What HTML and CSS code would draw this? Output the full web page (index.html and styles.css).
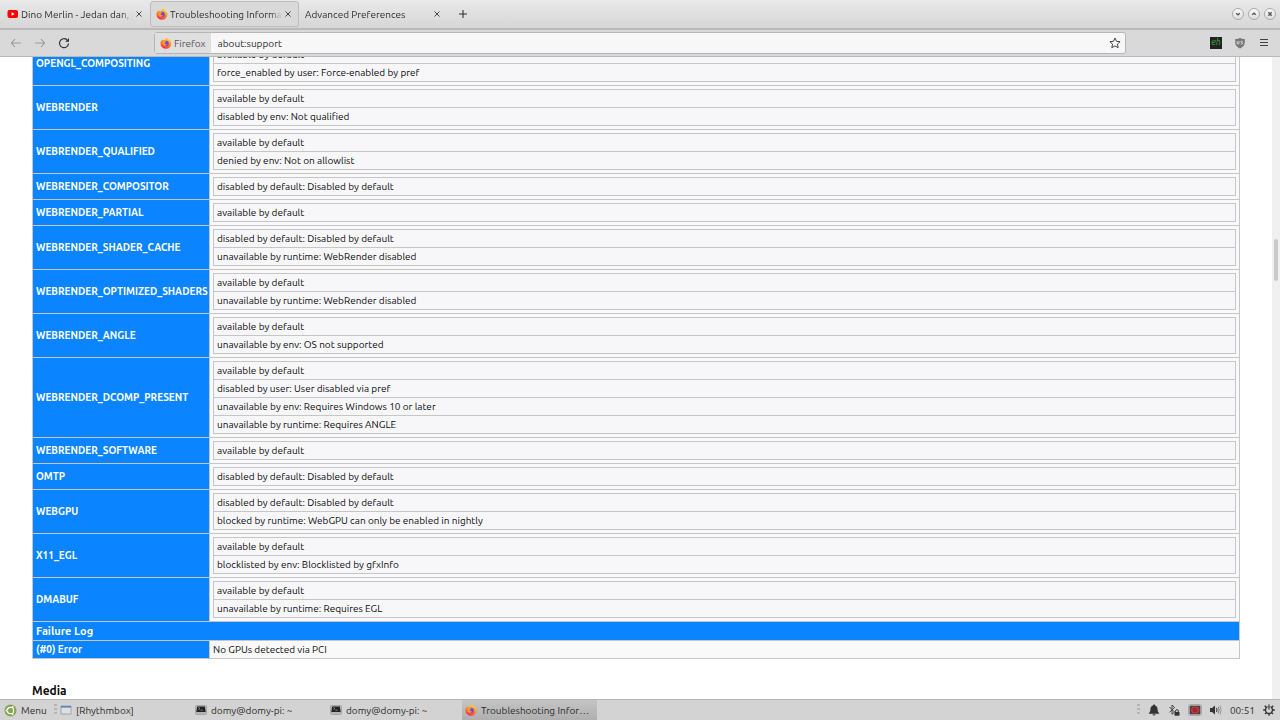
FILE: index.html
```
<!DOCTYPE html>
<html lang="en">
<head>
    <meta charset="UTF-8">
    <meta name="viewport" content="width=device-width, initial-scale=1.0">
    <title>Troubleshooting Information</title>
    <link rel="stylesheet" href="styles.css">
</head>
<body>
    <svg width="0" height="0" class="defs" aria-hidden="true">
        <defs>
            <linearGradient id="flame" x1="0.8" y1="0" x2="0.3" y2="1">
                <stop offset="0" stop-color="#ffe43a"/>
                <stop offset="0.5" stop-color="#ff8a1e"/>
                <stop offset="1" stop-color="#f5264f"/>
            </linearGradient>
            <symbol id="firefox" viewBox="0 0 16 16">
                <path fill="url(#flame)" d="M8.800 0.600c1.200 0.900 1.700 1.900 2 2.900 0.500-0.200 0.600-0.700 0.500-1.200 2.300 1.500 4 3.800 4 6.400A7.300 7.100 0 0 1 8 15.600 7.300 7.100 0 0 1 0.700 8.500c0-1.900 0.600-3.500 1.500-4.600l0.200 1c0.300-0.900 0.900-1.800 1.700-2.300v1.500c1.100-0.300 2-0.100 2.700 0.300C7 3 7.600 1.700 8.800 0.600z"/>
                <circle cx="8.200" cy="8.600" r="3.500" fill="#7542e5"/>
                <path fill="#ff9a1f" d="M3 5.200c1.500-0.500 2.900-0.300 3.800 0.500 0.800 0 1.400 0.200 1.500 0.700-0.300 0.800-1.700 0.900-2.100 1.700 0.200 1.600 1.700 2.300 3.400 1.700-0.800 1.900-3.100 2.600-4.900 1.400C3 10.100 2.400 7.500 3 5.200z"/>
            </symbol>
            <symbol id="cross" viewBox="0 0 8 8">
                <path d="M1.500 1.500l5 5M6.500 1.500l-5 5" fill="none" stroke="#444" stroke-width="1"/>
            </symbol>
            <symbol id="terminal" viewBox="0 0 12 12">
                <rect x="0.500" y="1.500" width="11" height="9" rx="1" fill="#b5b5b5" stroke="#a5a5a5"/>
                <path d="M2.200 2.500h7.600l0.900 5.500H1.300z" fill="#222"/>
                <path d="M3.500 3.500l1.500 1-1.500 1M5.500 6.200h2" fill="none" stroke="#ccc" stroke-width="0.600"/>
            </symbol>
        </defs>
    </svg>

    <header class="tab-strip">
        <div class="tab">
            <svg class="tab-icon" viewBox="0 0 12 12"><rect x="0.500" y="2" width="10.500" height="8" rx="2" fill="#f00"/><path d="M4.600 4.200v3.600L7.600 6z" fill="#fff"/></svg>
            <span class="tab-title">Dino Merlin - Jedan dan, jedan život</span>
            <button class="close" aria-label="Close tab"><svg viewBox="0 0 8 8"><use href="#cross"/></svg></button>
        </div>
        <div class="tab active">
            <svg class="tab-icon" viewBox="0 0 16 16"><use href="#firefox"/></svg>
            <span class="tab-title">Troubleshooting Information</span>
            <button class="close" aria-label="Close tab"><svg viewBox="0 0 8 8"><use href="#cross"/></svg></button>
        </div>
        <div class="tab">
            <span class="tab-title">Advanced Preferences</span>
            <button class="close" aria-label="Close tab"><svg viewBox="0 0 8 8"><use href="#cross"/></svg></button>
        </div>
        <button class="new-tab" aria-label="New tab"><svg viewBox="0 0 8 8"><path d="M4 0v8M0 4h8" stroke="#333" stroke-width="1.100"/></svg></button>
        <div class="window-buttons">
            <button aria-label="Minimize"><svg viewBox="0 0 12 12"><path d="M3.800 5l2.200 2 2.200-2" fill="none" stroke="#555" stroke-width="1.500"/></svg></button>
            <button aria-label="Maximize"><svg viewBox="0 0 12 12"><path d="M3.800 7l2.200-2 2.200 2" fill="none" stroke="#555" stroke-width="1.500"/></svg></button>
            <button aria-label="Close"><svg viewBox="0 0 12 12"><path d="M4 4l4 4M8 4l-4 4" fill="none" stroke="#555" stroke-width="1.600"/></svg></button>
        </div>
    </header>

    <nav class="toolbar">
        <div class="nav-buttons">
            <button aria-label="Back" disabled><svg viewBox="0 0 12 12"><path d="M11 6H1.500M5 2L1.500 6 5 10" fill="none" stroke="#999" stroke-width="1.100"/></svg></button>
            <button aria-label="Forward" disabled><svg viewBox="0 0 12 12"><path d="M1 6h9.500M7 2l3.500 4L7 10" fill="none" stroke="#999" stroke-width="1.100"/></svg></button>
            <button aria-label="Reload"><svg viewBox="0 0 12 12"><path d="M10.500 6.500A4.500 4.500 0 1 1 9 2.800" fill="none" stroke="#333" stroke-width="1.200"/><path d="M11 1v3.800H7.200z" fill="#333"/></svg></button>
        </div>
        <div class="url-bar">
            <span class="identity"><svg viewBox="0 0 16 16"><use href="#firefox"/></svg>Firefox</span>
            <input type="text" value="about:support" aria-label="Address">
            <button aria-label="Bookmark this page"><svg viewBox="0 0 12 12"><path d="M6 1l1.500 3.300 3.600 0.400-2.700 2.400 0.800 3.600L6 8.900l-3.200 1.800 0.800-3.600L0.900 4.700l3.600-0.400z" fill="none" stroke="#444" stroke-width="1"/></svg></button>
        </div>
        <div class="extensions">
            <button aria-label="Enhancer"><span class="eh">eh</span></button>
            <button aria-label="uBlock"><svg viewBox="0 0 12 12"><path d="M6 0.700c1.500 1 3 1.300 4.800 1.300v3.500C10.800 8.700 8.500 10.500 6 11.500 3.500 10.500 1.200 8.700 1.200 5.500V2C3 2 4.500 1.700 6 0.700z" fill="#777"/><path d="M3.200 4v2.200q0 1 0.900 1t0.900-1V4M8.700 4.300q-1.800-0.600-1.900 0.500c0 0.900 1.900 0.400 1.900 1.500s-1.300 0.900-2 0.500" fill="none" stroke="#eee" stroke-width="0.800"/></svg></button>
            <button aria-label="Open menu"><svg viewBox="0 0 12 12"><path d="M2 2.500h8M2 5.500h8M2 8.500h8" stroke="#444" stroke-width="1"/></svg></button>
        </div>
    </nav>

    <div class="viewport">
        <main class="page">
            <table class="report">
                <colgroup><col class="feature"><col></colgroup>
                <tr><th>OPENGL_COMPOSITING</th><td><table><tr><td>available by default</td></tr><tr><td>force_enabled by user: Force-enabled by pref</td></tr></table></td></tr>
                <tr><th>WEBRENDER</th><td><table><tr><td>available by default</td></tr><tr><td>disabled by env: Not qualified</td></tr></table></td></tr>
                <tr><th>WEBRENDER_QUALIFIED</th><td><table><tr><td>available by default</td></tr><tr><td>denied by env: Not on allowlist</td></tr></table></td></tr>
                <tr><th>WEBRENDER_COMPOSITOR</th><td><table><tr><td>disabled by default: Disabled by default</td></tr></table></td></tr>
                <tr><th>WEBRENDER_PARTIAL</th><td><table><tr><td>available by default</td></tr></table></td></tr>
                <tr><th>WEBRENDER_SHADER_CACHE</th><td><table><tr><td>disabled by default: Disabled by default</td></tr><tr><td>unavailable by runtime: WebRender disabled</td></tr></table></td></tr>
                <tr><th>WEBRENDER_OPTIMIZED_SHADERS</th><td><table><tr><td>available by default</td></tr><tr><td>unavailable by runtime: WebRender disabled</td></tr></table></td></tr>
                <tr><th>WEBRENDER_ANGLE</th><td><table><tr><td>available by default</td></tr><tr><td>unavailable by env: OS not supported</td></tr></table></td></tr>
                <tr><th>WEBRENDER_DCOMP_PRESENT</th><td><table><tr><td>available by default</td></tr><tr><td>disabled by user: User disabled via pref</td></tr><tr><td>unavailable by env: Requires Windows 10 or later</td></tr><tr><td>unavailable by runtime: Requires ANGLE</td></tr></table></td></tr>
                <tr><th>WEBRENDER_SOFTWARE</th><td><table><tr><td>available by default</td></tr></table></td></tr>
                <tr><th>OMTP</th><td><table><tr><td>disabled by default: Disabled by default</td></tr></table></td></tr>
                <tr><th>WEBGPU</th><td><table><tr><td>disabled by default: Disabled by default</td></tr><tr><td>blocked by runtime: WebGPU can only be enabled in nightly</td></tr></table></td></tr>
                <tr><th>X11_EGL</th><td><table><tr><td>available by default</td></tr><tr><td>blocklisted by env: Blocklisted by gfxInfo</td></tr></table></td></tr>
                <tr><th>DMABUF</th><td><table><tr><td>available by default</td></tr><tr><td>unavailable by runtime: Requires EGL</td></tr></table></td></tr>
                <tr><th colspan="2" class="section">Failure Log</th></tr>
                <tr><th>(#0) Error</th><td class="plain">No GPUs detected via PCI</td></tr>
            </table>
            <h2>Media</h2>
        </main>
        <div class="scrollbar"><div class="thumb"></div></div>
    </div>

    <footer class="panel">
        <button class="menu"><svg viewBox="0 0 14 14"><circle cx="7" cy="7" r="6.500" fill="#87a556"/><circle cx="7" cy="7" r="3.400" fill="none" stroke="#fff" stroke-width="1.300"/><path d="M7 7L10 3M7 7l3 4M7 7H2" stroke="#87a556" stroke-width="1"/><circle cx="2.700" cy="7" r="1" fill="#fff"/><circle cx="9.300" cy="3.200" r="1" fill="#fff"/><circle cx="9.300" cy="10.800" r="1" fill="#fff"/></svg>Menu</button>
        <span class="grip"></span>
        <div class="tasks">
            <button><svg viewBox="0 0 12 12"><rect x="1" y="2" width="10" height="8" fill="#dde0e3" stroke="#999" stroke-width="0.800"/><path d="M1 2.800h10" stroke="#5b84b8" stroke-width="1.600"/></svg><span>[Rhythmbox]</span></button>
            <button><svg viewBox="0 0 12 12"><use href="#terminal"/></svg><span>domy@domy-pi: ~</span></button>
            <button><svg viewBox="0 0 12 12"><use href="#terminal"/></svg><span>domy@domy-pi: ~</span></button>
            <button class="current"><svg viewBox="0 0 16 16"><use href="#firefox"/></svg><span>Troubleshooting Information — Mozilla Firefox</span></button>
        </div>
        <div class="tray">
            <span class="grip"></span>
            <svg viewBox="0 0 12 12"><path d="M6 0.500c0.600 0 1 0.400 1 1 1.800 0.500 2.600 2 2.600 4 0 2 0.600 2.800 1.600 3.700v0.600H0.800v-0.600c1-0.900 1.600-1.700 1.600-3.700 0-2 0.800-3.500 2.600-4 0-0.600 0.400-1 1-1zM4.500 10.300h3a1.500 1.300 0 0 1-3 0z" fill="#333"/></svg>
            <svg viewBox="0 0 12 12"><path d="M1.500 3l5 5L4 10.300V1l2.500 2.400-5 5" fill="none" stroke="#444" stroke-width="1"/><rect x="6.500" y="8" width="5" height="3.700" fill="#333"/><path d="M7.600 8V7a1.400 1.400 0 0 1 2.800 0v1" fill="none" stroke="#333" stroke-width="0.900"/></svg>
            <svg class="display" viewBox="0 0 14 12"><rect x="0.500" y="0.500" width="13" height="11" rx="1" fill="#eee" stroke="#aaa"/><rect x="1.500" y="1.500" width="11" height="9" fill="#444"/><ellipse cx="7" cy="6" rx="4" ry="3.600" fill="#d8343c"/><circle cx="7" cy="6" r="2" fill="none" stroke="#7d2026"/><path d="M5.600 4.600l2.800 2.800" stroke="#7d2026"/></svg>
            <svg viewBox="0 0 12 12"><path d="M0 4h2l3-2.500v9L2 8H0z" fill="#333"/><path d="M6.500 4q1 2 0 4" fill="none" stroke="#333"/><path d="M8.300 2.800q1.700 3.200 0 6.400" fill="none" stroke="#777"/><path d="M10 1.500q2.400 4.500 0 9" fill="none" stroke="#999"/></svg>
            <time>00:51</time>
            <svg viewBox="0 0 12 12"><circle cx="6" cy="6" r="3.500" fill="none" stroke="#333" stroke-width="1.300"/><path d="M6 9v2.800M9 6h2.800M0.200 6H3M8 8l2 2M4 8l-2 2M8.300 3.700l2-2M3.700 3.700l-2-2" stroke="#333" stroke-width="1.300"/><path d="M6 0v6" stroke="#d3d3d3" stroke-width="3"/><path d="M6 0.500v5" stroke="#333" stroke-width="1.200"/></svg>
        </div>
    </footer>
</body>
</html>
```
FILE: styles.css
```
* {
    box-sizing: border-box;
}
body {
    margin: 0;
    height: 100vh;
    display: flex;
    flex-direction: column;
    overflow: hidden;
    font-family: Ubuntu, 'Noto Sans', sans-serif;
    font-size: 10px;
    color: #2c2c2c;
    background: #fff;
}
.defs {
    position: absolute;
}
button, input {
    font: inherit;
    color: inherit;
    background: none;
    border: none;
    padding: 0;
    margin: 0;
}
svg {
    width: 12px;
    height: 12px;
    flex: none;
    display: block;
}
.tab-strip {
    display: flex;
    flex: none;
    align-items: center;
    height: 30px;
    padding-left: 1px;
    background: linear-gradient(#e9e9e9, #d6d6d6);
    border-bottom: 2px solid #b9b9b9;
}
.tab {
    display: flex;
    align-items: center;
    gap: 2px;
    width: 149px;
    height: 26px;
    padding: 0 6px 0 5px;
    border: 1px solid transparent;
    border-radius: 3px;
}
.tab.active {
    background: #d9d9d9;
    border-color: #bcbcbc;
}
.tab-title {
    flex: 1;
    overflow: hidden;
    white-space: nowrap;
    -webkit-mask-image: linear-gradient(to left, transparent, #000 12px);
    mask-image: linear-gradient(to left, transparent, #000 12px);
}
.close svg, .new-tab svg {
    width: 8px;
    height: 8px;
}
.new-tab {
    padding: 4px;
    margin-left: 7px;
}
.window-buttons {
    display: flex;
    gap: 4px;
    margin-left: auto;
    padding-right: 4px;
}
.window-buttons button {
    border: 1px solid #aaa;
    border-radius: 50%;
    background: linear-gradient(#fafafa, #dedede);
}
.window-buttons svg {
    width: 10px;
    height: 10px;
}
.toolbar {
    display: flex;
    flex: none;
    align-items: center;
    height: 27px;
    background: #d9d9d9;
    border-bottom: 1px solid #b9b9b9;
}
.nav-buttons {
    display: flex;
    gap: 12px;
    width: 154px;
    padding-left: 10px;
}
.url-bar {
    display: flex;
    flex: 1;
    align-items: center;
    height: 22px;
    padding-right: 4px;
    background: #f7f7f7;
    border: 1px solid #b5b5b5;
    border-radius: 3px;
}
.identity {
    display: flex;
    align-items: center;
    align-self: stretch;
    gap: 2px;
    padding: 0 5px;
    background: #dfdfdf;
    color: #555;
}
.url-bar input {
    flex: 1;
    padding: 0 7px;
    outline: none;
}
.extensions {
    display: flex;
    gap: 12px;
    justify-content: flex-end;
    width: 154px;
    padding-right: 10px;
}
.eh {
    display: block;
    width: 12px;
    height: 12px;
    background: #222;
    color: #2fae3c;
    font-size: 9px;
    font-style: italic;
    line-height: 11px;
}
.viewport {
    display: flex;
    flex: 1;
    min-height: 0;
}
/* scrolled down: the last rows sit on the lower edge */
.page {
    display: flex;
    flex: 1;
    flex-direction: column;
    justify-content: flex-end;
    overflow: hidden;
    padding: 0 32px;
    color: #0c0c0d;
}
.page table {
    width: 100%;
    border-collapse: collapse;
}
.page th, .page td {
    border: 1px solid #c6c6c8;
    padding: 0 3px;
    line-height: 17px;
    text-align: left;
}
.page .report {
    flex: none;
    table-layout: fixed;
    background: #f9f9fa;
}
.feature {
    width: 177px;
}
.report th {
    background: #0a84ff;
    color: #fff;
    white-space: nowrap;
}
.page .report > tbody > tr > td {
    padding: 3px;
}
.page .report > tbody > tr > .plain {
    padding: 0 3px;
}
.page .report > tbody > tr > .section {
    font-size: 11px;
    line-height: 18px;
}
.report table {
    background: #f7f7fa;
}
h2 {
    flex: none;
    margin: 24px 0 0;
    font-size: 12px;
    line-height: 16px;
}
.scrollbar {
    flex: none;
    width: 8px;
    padding: 182px 2px 0;
    background: #f0f0f0;
}
.thumb {
    height: 42px;
    border-radius: 2px;
    background: #c9c9c9;
}
.panel {
    display: flex;
    flex: none;
    align-items: center;
    height: 21px;
    padding-left: 4px;
    background: #d3d3d3;
    border-top: 1px solid #b5b5b5;
}
.menu {
    display: flex;
    align-items: center;
    gap: 4px;
    width: 50px;
}
.menu svg {
    width: 13px;
    height: 13px;
}
.grip {
    width: 3px;
    height: 12px;
    background: repeating-linear-gradient(#b5b5b5 0 2px, transparent 2px 4px);
}
.tasks {
    display: flex;
    flex: 1;
    align-self: stretch;
}
.tasks button {
    display: flex;
    align-items: center;
    gap: 4px;
    width: 135px;
    padding: 0 3px;
}
.tasks span {
    overflow: hidden;
    white-space: nowrap;
    text-overflow: ellipsis;
}
.tasks .current {
    background: linear-gradient(#c4c4c4, #afafaf);
}
.tray {
    display: flex;
    align-items: center;
    gap: 8px;
    padding-right: 5px;
}
.tray .display {
    width: 14px;
}
```
